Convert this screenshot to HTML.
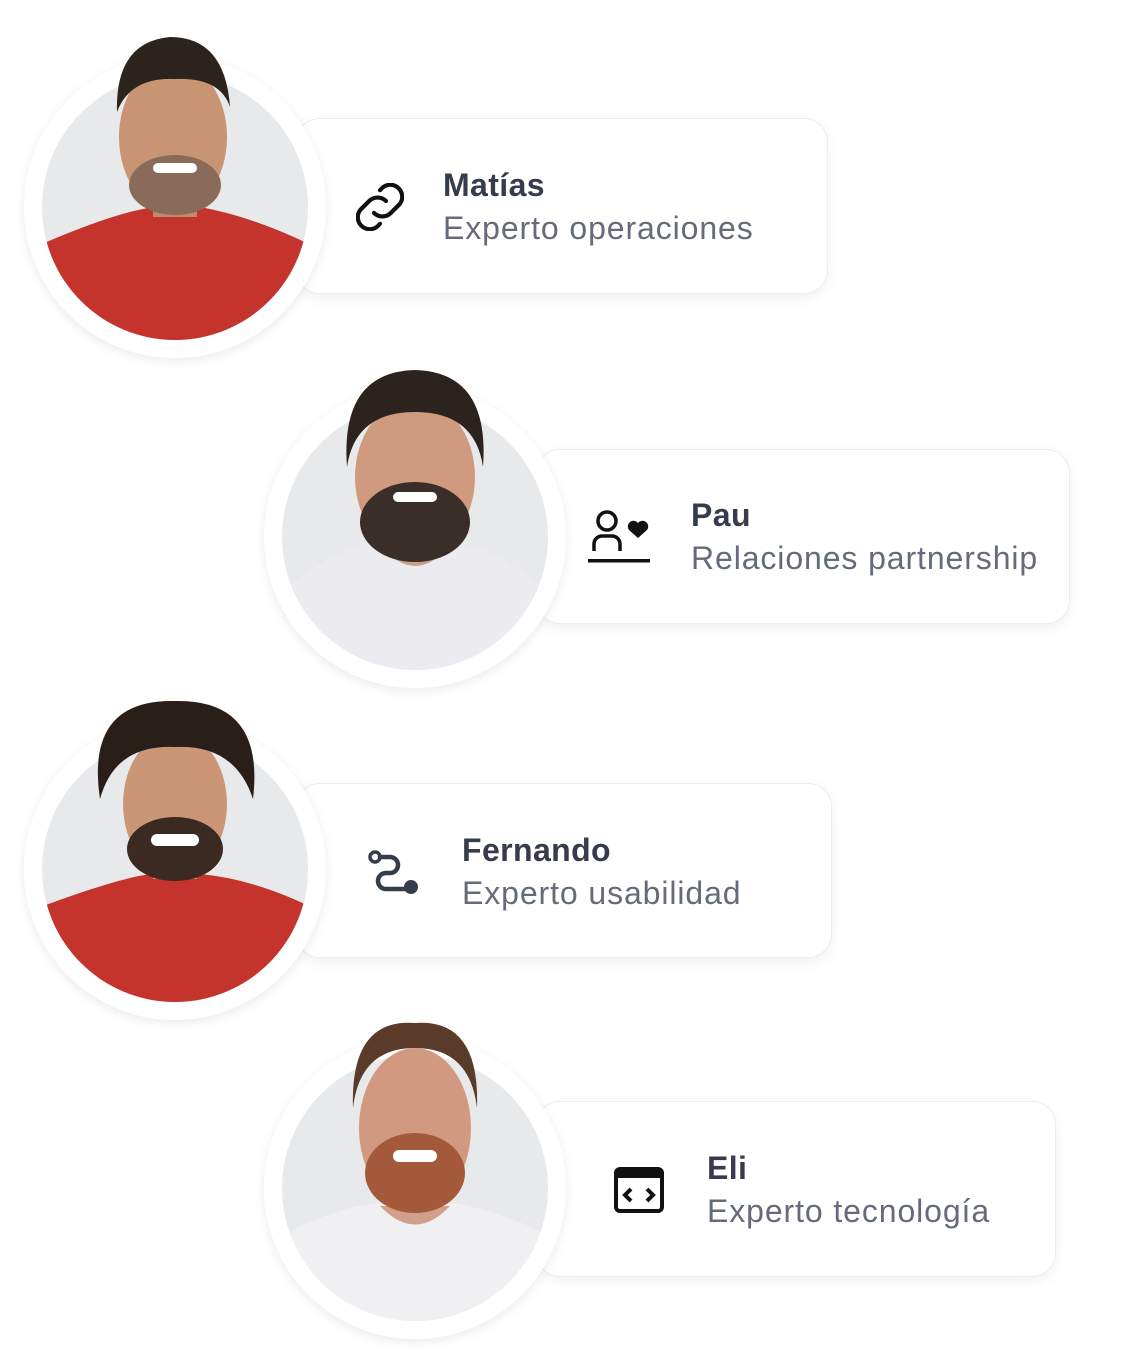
<!DOCTYPE html>
<html><head><meta charset="utf-8"><style>
html,body{margin:0;padding:0;background:#fff;}
body{width:1140px;height:1367px;position:relative;overflow:hidden;font-family:"Liberation Sans",sans-serif;}
.card{position:absolute;background:#fff;border:1px solid #ececee;border-radius:24px;box-shadow:0 4px 14px rgba(0,0,0,0.06);box-sizing:border-box;}
.av{position:absolute;overflow:visible;}
.t{position:absolute;white-space:nowrap;}
.n{font-weight:bold;font-size:32px;color:#353d4d;line-height:43px;letter-spacing:0.4px;}
.s{font-size:32px;color:#646b7a;line-height:43px;letter-spacing:0.9px;}
.ic{position:absolute;}
</style></head><body>

<div class="card" style="left:296px;top:118px;width:532px;height:176px;"></div>
<div class="card" style="left:536px;top:449px;width:534px;height:175px;"></div>
<div class="card" style="left:296px;top:783px;width:536px;height:175px;"></div>
<div class="card" style="left:536px;top:1101px;width:520px;height:176px;"></div>

<svg width="0" height="0" style="position:absolute">
<defs>
<clipPath id="cp"><circle cx="0" cy="0" r="133"/></clipPath>
<filter id="sh" x="-20%" y="-20%" width="140%" height="140%"><feDropShadow dx="0" dy="3" stdDeviation="5" flood-color="#000" flood-opacity="0.08"/></filter>
</defs>
</svg>

<!-- Avatar 1 -->
<svg class="av" style="left:15px;top:17px" width="320" height="360" viewBox="-160 -190 320 360">
<circle r="151" fill="#fff" filter="url(#sh)"/>
<circle r="133" fill="#e8e9eb"/>
<g clip-path="url(#cp)">
<path d="M-140 40 Q-60 5 -20 0 L25 0 Q80 10 140 40 L140 140 L-140 140Z" fill="#c4342c"/>
</g>
<rect x="-22" y="-25" width="44" height="35" fill="#c08a6c"/>
<ellipse cx="-2" cy="-70" rx="54" ry="75" fill="#c99474"/>
<ellipse cx="0" cy="-22" rx="46" ry="30" fill="#8a6a58"/>
<path d="M-58 -95 Q-60 -165 -5 -170 Q50 -170 55 -100 Q45 -130 0 -128 Q-45 -130 -58 -95Z" fill="#2d231d"/>
<rect x="-22" y="-44" width="44" height="10" rx="5" fill="#fff"/>
</svg>

<!-- Avatar 2 -->
<svg class="av" style="left:255px;top:347px" width="320" height="360" viewBox="-160 -190 320 360">
<circle r="151" fill="#fff" filter="url(#sh)"/>
<circle r="133" fill="#e8e9eb"/>
<g clip-path="url(#cp)">
<path d="M-140 60 Q-80 10 -40 5 L40 5 Q90 15 140 60 L140 140 L-140 140Z" fill="#ececf0"/>
<path d="M-35 8 Q0 50 35 8Z" fill="#caa08a"/>
</g>
<ellipse cx="0" cy="-60" rx="60" ry="78" fill="#cf9a7e"/>
<ellipse cx="0" cy="-15" rx="55" ry="40" fill="#3a2e28"/>
<path d="M-68 -70 Q-75 -165 0 -167 Q75 -165 68 -70 Q60 -125 0 -125 Q-60 -125 -68 -70Z" fill="#2c231f"/>
<rect x="-22" y="-45" width="44" height="10" rx="5" fill="#fff"/>
</svg>

<!-- Avatar 3 -->
<svg class="av" style="left:15px;top:679px" width="320" height="360" viewBox="-160 -190 320 360">
<circle r="151" fill="#fff" filter="url(#sh)"/>
<circle r="133" fill="#e8e9eb"/>
<g clip-path="url(#cp)">
<path d="M-140 40 Q-60 10 -25 5 L25 5 Q80 10 140 40 L140 140 L-140 140Z" fill="#c4342c"/>
</g>
<rect x="-22" y="-25" width="44" height="35" fill="#c08a6c"/>
<ellipse cx="0" cy="-65" rx="52" ry="72" fill="#cb9676"/>
<ellipse cx="0" cy="-20" rx="48" ry="32" fill="#3b2a22"/>
<path d="M-75 -70 Q-90 -170 0 -168 Q90 -170 78 -70 Q60 -125 0 -122 Q-60 -125 -75 -70Z" fill="#2a1e18"/>
<rect x="-24" y="-35" width="48" height="12" rx="6" fill="#fff"/>
</svg>

<!-- Avatar 4 -->
<svg class="av" style="left:255px;top:998px" width="320" height="360" viewBox="-160 -190 320 360">
<circle r="151" fill="#fff" filter="url(#sh)"/>
<circle r="133" fill="#e8e9eb"/>
<g clip-path="url(#cp)">
<path d="M-140 50 Q-80 20 -40 15 L40 15 Q90 25 140 50 L140 140 L-140 140Z" fill="#f0f0f2"/>
<path d="M-35 18 Q0 55 35 18Z" fill="#d0a08a"/>
</g>
<ellipse cx="0" cy="-60" rx="56" ry="80" fill="#d19a80"/>
<ellipse cx="0" cy="-15" rx="50" ry="40" fill="#a45a3a"/>
<path d="M-62 -80 Q-65 -170 0 -165 Q65 -170 62 -80 Q55 -140 0 -140 Q-55 -140 -62 -80Z" fill="#5a3b2a"/>
<rect x="-22" y="-38" width="44" height="12" rx="6" fill="#fff"/>
</svg>

<!-- Icons -->
<svg class="ic" style="left:356px;top:183px" width="48" height="48" viewBox="4 4 16 16" fill="none" stroke="#111" stroke-width="1.4" stroke-linecap="round" stroke-linejoin="round">
<path d="M10 14a4 4 0 0 0 5.6 0l3-3a4 4 0 0 0-5.6-5.6l-1 1"/>
<path d="M14 10a4 4 0 0 0-5.6 0l-3 3a4 4 0 0 0 5.6 5.6l1-1"/>
</svg>

<svg class="ic" style="left:586px;top:508px" width="66" height="58" viewBox="0 0 66 58">
<circle cx="21" cy="13" r="9" fill="none" stroke="#111" stroke-width="3.5"/>
<path d="M8 43 V36 a8 8 0 0 1 8-8 h10 a8 8 0 0 1 8 8 V43" fill="none" stroke="#111" stroke-width="3.5"/>
<rect x="2" y="51" width="62" height="3.5" fill="#111"/>
<path d="M52 30 L43 22 A5 5 0 0 1 52 15 A5 5 0 0 1 61 22 Z" fill="#111"/>
</svg>

<svg class="ic" style="left:364px;top:846px" width="60" height="52" viewBox="0 0 60 52" fill="none" stroke="#353d4d" stroke-width="4.5" stroke-linecap="round">
<circle cx="11" cy="11" r="5" stroke-width="3.5"/>
<path d="M16 11 H26 a8 8 0 0 1 0 16 H22 a8 8 0 0 0 0 16 H46"/>
<circle cx="47" cy="41" r="7" fill="#353d4d" stroke="none"/>
</svg>

<svg class="ic" style="left:613px;top:1166px" width="52" height="48" viewBox="0 0 52 48">
<rect x="3" y="3" width="46" height="42" rx="4" fill="none" stroke="#111" stroke-width="4"/>
<rect x="3" y="3" width="46" height="9" fill="#111"/>
<path d="M18 23 L12 29 L18 35 M34 23 L40 29 L34 35" fill="none" stroke="#111" stroke-width="4"/>
</svg>

<!-- Text -->
<div class="t n" style="left:443px;top:164px">Matías</div>
<div class="t s" style="left:443px;top:207px">Experto operaciones</div>
<div class="t n" style="left:691px;top:494px">Pau</div>
<div class="t s" style="left:691px;top:537px">Relaciones partnership</div>
<div class="t n" style="left:462px;top:829px">Fernando</div>
<div class="t s" style="left:462px;top:872px">Experto usabilidad</div>
<div class="t n" style="left:707px;top:1147px">Eli</div>
<div class="t s" style="left:707px;top:1190px">Experto tecnología</div>

</body></html>
